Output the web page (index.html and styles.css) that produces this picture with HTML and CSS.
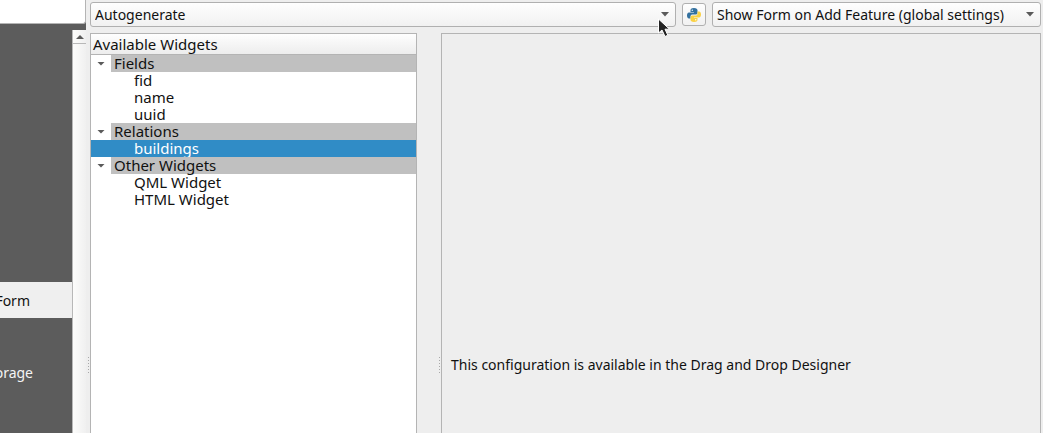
FILE: index.html
```html
<!DOCTYPE html>
<html lang="en">
<head>
<meta charset="utf-8">
<title>Attributes Form</title>
<link rel="stylesheet" href="styles.css">
</head>
<body>
<div class="window">
  <aside class="sidebar">
    <input class="search" type="text" aria-label="Search">
    <div class="sidebar-body">
      <nav class="pages">
        <a class="page page-current" href="#form">Attributes Form</a>
        <a class="page page-storage" href="#storage">Auxiliary Storage</a>
      </nav>
      <div class="scrollbar">
        <button class="scroll-up" type="button" aria-label="Scroll up"><svg width="8" height="4" viewBox="0 0 8 4"><path d="M4 0 8 4H0z" fill="#5a5a5a"/></svg></button>
      </div>
    </div>
  </aside>
  <div class="splitter"><span class="grip"></span></div>
  <main class="main">
    <div class="toolbar">
      <div class="combo combo-layout">
        <select aria-label="Form layout"><option>Autogenerate</option></select>
        <svg class="arrow" width="8" height="5" viewBox="0 0 8 5"><path d="M0 0H8L4 4.5z" fill="#5a5a5a"/></svg>
        <svg class="cursor" width="14" height="20" viewBox="0 0 14 20"><path d="M1.5 1V15L5 12 8 18.5 10.8 17.2 8 11.2H12.5z" fill="#222" stroke="#fff" stroke-width="1"/></svg>
      </div>
      <button class="python" type="button" aria-label="Python init function">
        <svg width="14" height="14" viewBox="0 0 28 28"><path d="M14 0C8 0 7 2 7 5v3h7v1H4C1 9 0 12 0 15s1 6 4 6h3v-4c0-3 2-4 4-4h7c2 0 3-2 3-4V5c0-3-2-5-7-5z" fill="#34719f"/><path d="M14 28c6 0 7-2 7-5v-3h-7v-1h10c3 0 4-3 4-6s-1-6-4-6h-3v4c0 3-2 4-4 4h-7c-2 0-3 2-3 4v4c0 3 2 5 7 5z" fill="#fad144"/><circle cx="10.5" cy="4.5" r="1.4" fill="#fff"/><circle cx="17.5" cy="23.5" r="1.4" fill="#fff"/></svg>
      </button>
      <div class="combo combo-show">
        <select aria-label="Show form"><option>Show Form on Add Feature (global settings)</option></select>
        <svg class="arrow" width="8" height="5" viewBox="0 0 8 5"><path d="M0 0H8L4 4.5z" fill="#5a5a5a"/></svg>
      </div>
    </div>
    <div class="panels">
      <section class="tree">
        <h2 class="tree-header">Available Widgets</h2>
        <ul class="rows">
          <li><div class="group"><button class="twisty" type="button" aria-label="Collapse Fields"></button><span class="group-name">Fields</span></div>
            <ul class="rows"><li class="leaf">fid</li><li class="leaf">name</li><li class="leaf">uuid</li></ul></li>
          <li><div class="group"><button class="twisty" type="button" aria-label="Collapse Relations"></button><span class="group-name">Relations</span></div>
            <ul class="rows"><li class="leaf leaf-selected">buildings</li></ul></li>
          <li><div class="group"><button class="twisty" type="button" aria-label="Collapse Other Widgets"></button><span class="group-name">Other Widgets</span></div>
            <ul class="rows"><li class="leaf">QML Widget</li><li class="leaf">HTML Widget</li></ul></li>
        </ul>
      </section>
      <div class="divider"><span class="grip"></span></div>
      <section class="detail"><p class="message">This configuration is available in the Drag and Drop Designer</p></section>
    </div>
  </main>
</div>
</body>
</html>
```
FILE: styles.css
```css
* { box-sizing: border-box; }
body {
  margin: 0;
  background: #eeeeee;
  color: #111;
  font: 14px/17px "Noto Sans", "Open Sans", sans-serif;
}
button, input, select { font: inherit; color: inherit; margin: 0; padding: 0; }
svg { display: block; }

.window { display: flex; height: 100vh; overflow: hidden; }

.sidebar { display: flex; flex-direction: column; flex: 0 0 86px; min-width: 0; background: #5c5c5c; }
.search {
  width: 100%;
  height: 24px;
  border: 1px solid #b4b4b4;
  border-width: 0 1px 1px 0;
  border-radius: 0 0 3px 0;
  background: #fff;
}
.sidebar-body { display: flex; flex: 1; padding-top: 6px; }
.pages { display: flex; flex-direction: column; flex: 1; min-width: 0; gap: 36px; padding-top: 252px; }
.page {
  display: flex;
  flex: 0 0 36px;
  align-items: center;
  justify-content: flex-end;
  padding-right: 42px;
  overflow: hidden;
  white-space: nowrap;
  color: #f4f4f4;
  text-decoration: none;
}
.page-current { background: #efefef; color: #111; }
.page-storage { padding-right: 39px; }
.scrollbar {
  flex: 0 0 14px;
  border-left: 1px solid #b8b8b8;
  background: linear-gradient(to right, #fcfcfb, #f0f0f0);
}
.scroll-up {
  display: grid;
  place-items: center;
  width: 100%;
  height: 14px;
  border: 0;
  border-bottom: 1px solid #b8b8b8;
  background: transparent;
}

.splitter { flex: 0 0 4px; padding: 357px 1px 0 2px; }
.grip {
  display: block;
  width: 1px;
  height: 16px;
  background: repeating-linear-gradient(to bottom, #a8a8a8 0 1px, transparent 1px 3px);
}

.main { display: flex; flex: 1; flex-direction: column; min-width: 0; padding: 2px 2px 0 0; }
.toolbar { display: flex; align-items: center; gap: 6px; }
.combo { position: relative; }
.combo-layout { flex: 1; }
.combo-show { flex: 0 0 329px; }
.combo select {
  display: block;
  appearance: none;
  width: 100%;
  height: 25px;
  padding: 0 24px 0 4px;
  border: 1px solid #b0b0b0;
  border-radius: 3px;
  background: linear-gradient(#fefefe, #f1f1f1);
  line-height: 23px;
}
.arrow { position: absolute; top: 10px; right: 7px; pointer-events: none; }
.cursor { position: absolute; top: 16px; right: 5px; z-index: 1; pointer-events: none; }
.python {
  display: grid;
  place-items: center;
  width: 24px;
  height: 23px;
  border: 1px solid #b0b0b0;
  border-radius: 3px;
  background: linear-gradient(#fefefe, #f1f1f1);
}

.panels { display: flex; flex: 1; padding-top: 6px; }
.tree { flex: 0 0 327px; border: 1px solid #b4b4b4; border-bottom: 0; background: #fff; font-size: 15px; }
.tree-header {
  margin: 0;
  padding: 2px 2px 1px;
  border-bottom: 1px solid #b4b4b4;
  background: linear-gradient(#fefefe, #ededed);
  font: inherit;
}
.rows { margin: 0; padding: 0; list-style: none; }
.group { display: flex; }
.twisty { display: grid; place-items: center; flex: 0 0 20px; border: 0; background: transparent; }
.twisty::before {
  content: "";
  width: 8px;
  height: 4px;
  background: #5a5a5a;
  clip-path: polygon(0 0, 100% 0, 50% 100%);
}
.group-name { flex: 1; padding-left: 3px; background: #c0c0c0; }
.leaf { padding-left: 43px; }
.leaf-selected { background: #308cc6; color: #fff; }
.divider { flex: 0 0 24px; padding: 324px 1px 0 22px; }
.detail { flex: 1; border: 1px solid #b4b4b4; border-bottom: 0; padding: 322px 9px 0; }
.message { margin: 0; }
```
